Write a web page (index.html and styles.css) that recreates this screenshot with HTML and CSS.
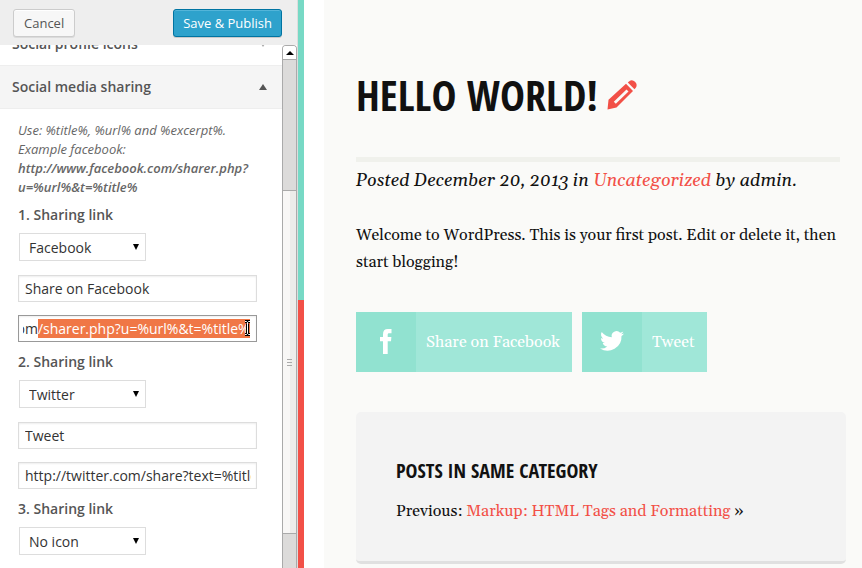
FILE: index.html
```html
<!DOCTYPE html>
<html lang="en">
<head>
<meta charset="utf-8">
<title>Customize: Social media sharing</title>
<link rel="stylesheet" href="styles.css">
</head>
<body>
<aside class="customizer">
  <header class="actions">
    <button type="button" class="button">Cancel</button>
    <button type="button" class="button primary">Save &amp; Publish</button>
  </header>
  <div class="viewport">
    <div class="sections">
      <h3 class="section-title">Social profile icons <svg class="toggle closed" viewBox="0 0 8 6"><path d="M0 0h8L4 6z"/></svg></h3>
      <h3 class="section-title open">Social media sharing <svg class="toggle" viewBox="0 0 8 6"><path d="M0 6h8L4 0z"/></svg></h3>
      <form class="fields">
        <p class="hint">Use: %title%, %url% and %excerpt%. Example facebook: <strong>http://www.facebook.com/sharer.php?<wbr>u=%url%&amp;t=%title%</strong></p>
        <label class="label" for="icon1">1. Sharing link</label>
        <div class="picker">
          <select id="icon1"><option>Facebook</option><option>Twitter</option><option>No icon</option></select>
          <svg class="caret" viewBox="0 0 6 6"><path d="M0 0h6L3 6z"/></svg>
        </div>
        <input class="text" type="text" aria-label="First link text" value="Share on Facebook">
        <div class="editing">
          <input class="text" id="url1" type="text" aria-label="First link address" value="http://www.facebook.com/sharer.php?u=%url%&amp;t=%title%">
          <svg class="ibeam" viewBox="0 0 7 16"><path class="edge" d="M1 1.500h1.500l1 1 1-1H6M3.500 2.500v11M1 14.500h1.500l1-1 1 1H6"/><path class="core" d="M1 1.500h1.500l1 1 1-1H6M3.500 2.500v11M1 14.500h1.500l1-1 1 1H6"/></svg>
        </div>
        <label class="label" for="icon2">2. Sharing link</label>
        <div class="picker">
          <select id="icon2"><option>Twitter</option><option>Facebook</option><option>No icon</option></select>
          <svg class="caret" viewBox="0 0 6 6"><path d="M0 0h6L3 6z"/></svg>
        </div>
        <input class="text" type="text" aria-label="Second link text" value="Tweet">
        <input class="text" type="text" aria-label="Second link address" value="http://twitter.com/share?text=%title%&amp;url=%url%">
        <label class="label" for="icon3">3. Sharing link</label>
        <div class="picker">
          <select id="icon3"><option>No icon</option><option>Facebook</option><option>Twitter</option></select>
          <svg class="caret" viewBox="0 0 6 6"><path d="M0 0h6L3 6z"/></svg>
        </div>
      </form>
    </div>
    <div class="scrollbar">
      <div class="scroll-up"><svg viewBox="0 0 8 4"><path d="M0 4h8L4 0z"/></svg></div>
      <div class="track before"></div>
      <div class="thumb"><svg viewBox="0 0 5 7"><path d="M0 .5h5M0 3.500h5M0 6.500h5"/></svg></div>
      <div class="track after"></div>
    </div>
  </div>
</aside>
<div class="stripe"></div>
<main class="page">
  <h1 class="title">Hello world!
    <a class="edit" href="#edit" aria-label="Edit"><svg viewBox="0 0 30 30"><path fill-rule="evenodd" d="M.5 29.500 1.500 19.800 19 3.800l7 7.200L9.500 27.500zM6.800 21.800l2 2L21.500 11.500l-2-2z"/><path d="m20.800 2.400 1.800-1.500C26-1.500 31.800 3.700 28.800 7.700L27.500 9.300z"/></svg></a>
  </h1>
  <p class="meta">Posted December 20, 2013 in <a href="#uncategorized">Uncategorized</a> by admin.</p>
  <p class="entry">Welcome to WordPress. This is your first post. Edit or delete it, then start blogging!</p>
  <nav class="shares">
    <a class="share" href="#facebook"><span class="share-icon"><svg class="facebook" viewBox="0 0 12 25"><path d="M3 25V12.300H0V8h3V5.500C3 1.800 4.600 0 7.800 0H11.500v4.200H9.200C8 4.200 7.700 4.800 7.700 5.800V8h3.700L11 12.300H7.700V25z"/></svg></span><span class="share-text">Share on Facebook</span></a>
    <a class="share" href="#twitter"><span class="share-icon"><svg class="twitter" viewBox="0 0 24 20"><path d="M24 2.400a10 10 0 0 1-2.800.8A5 5 0 0 0 23.300.5a10 10 0 0 1-3.100 1.200 4.900 4.900 0 0 0-8.400 4.500A14 14 0 0 1 1.700 1a4.900 4.900 0 0 0 1.500 6.600A5 5 0 0 1 1 7a4.900 4.900 0 0 0 3.900 4.900 5 5 0 0 1-2.200.1 4.900 4.900 0 0 0 4.600 3.400A10 10 0 0 1 0 17.500 14 14 0 0 0 21.500 5 10 10 0 0 0 24 2.400z"/></svg></span><span class="share-text">Tweet</span></a>
  </nav>
  <section class="related">
    <h2>Posts in same category</h2>
    <p>Previous: <a href="#previous">Markup: HTML Tags and Formatting</a> »</p>
  </section>
</main>
<script src="app.js"></script>
</body>
</html>
```
FILE: styles.css
```css
* { box-sizing: border-box; }

body {
  margin: 0;
  display: flex;
  height: 100vh;
  overflow: hidden;
  background: #fff;
  font-family: "Open Sans", sans-serif;
}

h1, h2, h3, p { margin: 0; }
svg { display: block; overflow: visible; }

.customizer {
  flex: none;
  width: 298px;
  display: flex;
  flex-direction: column;
  background: #fff;
  border-right: 1px solid #ddd;
  color: #555;
}

.actions {
  flex: none;
  display: flex;
  justify-content: space-between;
  align-items: center;
  height: 45px;
  padding: 1px 15px 0 13px;
  background: #eee;
}

.button {
  height: 28px;
  padding: 0 10px;
  border: 1px solid #ccc;
  border-radius: 3px;
  background: #f7f7f7;
  box-shadow: inset 0 1px 0 #fff, 0 1px 0 rgba(0, 0, 0, .08);
  color: #555;
  font: 13px/26px "Open Sans", sans-serif;
}

.primary {
  padding: 0 9px;
  border-color: #0074a2;
  background: #2ea2cc;
  box-shadow: inset 0 1px 0 rgba(120, 200, 230, .5), 0 1px 0 rgba(0, 0, 0, .15);
  color: #fff;
}

.viewport {
  flex: 1;
  min-height: 0;
  display: flex;
  overflow: hidden;
}

.sections {
  flex: 1;
  min-width: 0;
  margin-top: -22px;
}

.section-title {
  display: flex;
  justify-content: space-between;
  align-items: center;
  height: 43px;
  padding: 0 15px 2px 12px;
  border-bottom: 1px solid #eee;
  font-size: 14px;
  font-weight: 600;
}

.open { background: #f5f5f5; }
.toggle { width: 8px; height: 6px; margin-top: 2px; fill: #555; }
.closed { fill: #aaa; }

.fields {
  display: flex;
  flex-direction: column;
  padding: 12px 25px 12px 18px;
}

.hint {
  color: #666;
  font-size: 13px;
  font-style: italic;
  line-height: 19px;
}

.hint strong { font-weight: 600; }

.label {
  margin: 6px 0;
  font-size: 14px;
  font-weight: 600;
  line-height: 24px;
}

.picker {
  position: relative;
  width: 127px;
  margin: 0 0 14px 1px;
}

.picker select {
  display: block;
  appearance: none;
  width: 100%;
  height: 28px;
  padding: 0 9px;
  border: 1px solid #ddd;
  border-radius: 0;
  background: #fff;
  color: #333;
  font: 14px "Open Sans", sans-serif;
}

.caret {
  position: absolute;
  top: 11px;
  right: 7px;
  width: 6px;
  height: 6px;
  pointer-events: none;
}

.text {
  display: block;
  width: 100%;
  height: 27px;
  padding: 0 5px 0 6px;
  border: 1px solid #ddd;
  outline: 0;
  background: #fff;
  box-shadow: inset 0 1px 2px rgba(0, 0, 0, .07);
  color: #333;
  font: 14px "Open Sans", sans-serif;
}

.text + .text, .text + .editing { margin-top: 13px; }
.text + .label, .editing + .label { margin-top: 8px; }

.editing { position: relative; }
.editing .text {
  padding: 0 6px 0 4px;
  border-color: #999;
}
.text::selection { background: #f07746; color: #fff; }

.ibeam {
  position: absolute;
  top: 5px;
  right: 6px;
  width: 7px;
  height: 16px;
  fill: none;
}
.edge { stroke: #000; stroke-width: 3; }
.core { stroke: #fff; stroke-width: 1; }

.scrollbar {
  flex: none;
  width: 15px;
  display: flex;
  flex-direction: column;
  border: solid #aaa;
  border-width: 1px 1px 0;
  border-radius: 4px 4px 0 0;
  overflow: hidden;
}

.scroll-up {
  display: grid;
  place-items: center;
  height: 14px;
  border-bottom: 1px solid #aaa;
  background: #fff;
}
.scroll-up svg { width: 8px; height: 4px; }
.track { background: #dcdbda; }
.before { flex: 131; }
.after { flex: 34; }

.thumb {
  flex: 343;
  display: grid;
  place-items: center;
  border: solid #aaa;
  border-width: 1px 0;
  background: linear-gradient(90deg, #f8f7f6 50%, #edecea 50%);
}
.thumb svg { width: 5px; height: 7px; stroke: #aaa; }

.stripe {
  flex: none;
  width: 6px;
  background: linear-gradient(#77d9c5 300px, #f25047 300px);
}

.page {
  flex: 1;
  min-width: 0;
  margin-left: 20px;
  padding: 65px 12px 0 32px;
  background: #fafaf8;
  color: #111;
  font-family: Georgia, Gelasio, "Liberation Serif", serif;
}

.page a { color: #f25047; text-decoration: none; }

.title, .related h2 {
  font-family: "Open Sans Condensed", "Liberation Sans Narrow", "Open Sans", sans-serif;
  font-weight: 700;
  text-transform: uppercase;
}

.title {
  display: flex;
  align-items: center;
  gap: 9px;
  margin-right: 10px;
  padding-bottom: 32px;
  border-bottom: 5px solid #f0f1ec;
  font-size: 42px;
  line-height: 60px;
}
.edit svg { width: 30px; height: 30px; fill: #f25047; }

.meta {
  font-size: 18px;
  font-style: italic;
  line-height: 38px;
}

.entry {
  margin-top: 22px;
  font-size: 16px;
  line-height: 27px;
}

.shares {
  display: flex;
  gap: 10px;
  margin-top: 36px;
}

.page .share {
  display: flex;
  height: 60px;
  background: #a0e7d8;
  color: #fff;
  font-size: 16px;
  line-height: 60px;
}

.share-icon {
  display: grid;
  place-items: center;
  width: 60px;
  background: #91e2d0;
}
.share-icon svg { margin-bottom: 2px; fill: #fff; }
.facebook { width: 12px; height: 25px; }
.twitter { width: 24px; height: 20px; }
.share-text { padding: 0 12px 0 10px; }

.related {
  margin: 40px 4px 0 0;
  padding: 41px 40px 36px;
  border-bottom: 3px solid #e0e0e0;
  border-radius: 5px;
  background: #f3f3f3;
  font-size: 16px;
  line-height: 27px;
}

.related h2 {
  margin-bottom: 9px;
  font-size: 20px;
  line-height: 36px;
}
```
FILE: app.js
```js
const address = document.getElementById("url1");
address.focus();
address.setSelectionRange(address.value.indexOf("/sharer"), address.value.length);
address.scrollLeft = address.scrollWidth;
```
